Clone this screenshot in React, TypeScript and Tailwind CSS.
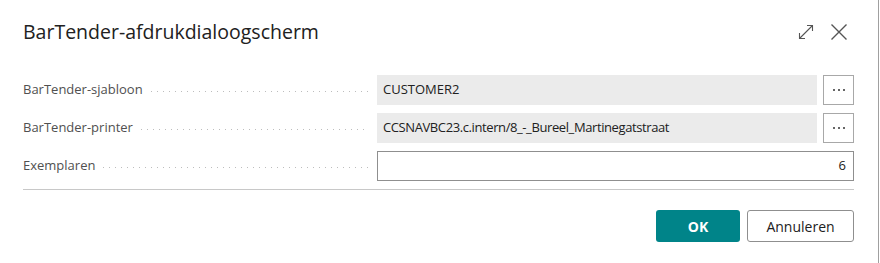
import React from "react";

const font = { fontFamily: '"Open Sans", "Noto Sans", sans-serif' };

function Leader() {
  return (
    <div className="flex-1 mx-2 h-px self-center mt-[3px] bg-[linear-gradient(to_right,#bdbdbd_1px,transparent_1px)] bg-[length:6px_1px] bg-repeat-x" />
  );
}

function Row({ label, children }: { label: string; children: React.ReactNode }) {
  return (
    <div className="flex items-stretch h-[30px]">
      <div className="w-[354px] flex items-center pr-[1px]">
        <span className="text-[13px] text-[#505050] whitespace-nowrap">{label}</span>
        <Leader />
      </div>
      <div className="flex-1 flex gap-[6px]">{children}</div>
    </div>
  );
}

function Dots() {
  return (
    <div className="w-[31px] border border-[#a8a8a8] bg-white flex items-center justify-center gap-[3px]">
      <span className="w-[2px] h-[2px] bg-[#333] rounded-full" />
      <span className="w-[2px] h-[2px] bg-[#333] rounded-full" />
      <span className="w-[2px] h-[2px] bg-[#333] rounded-full" />
    </div>
  );
}

export default function App() {
  return (
    <div className="w-[880px] h-[263px] bg-white" style={font}>
      <div className="w-[879px] h-[263px] border-r border-[#a0a0a0] pl-[23px] pr-[24px]">
        <div className="flex items-center h-[62px] pt-[1px]">
          <div className="text-[19.5px] text-[#212121] flex-1">BarTender-afdrukdialoogscherm</div>
          <svg width="16" height="16" viewBox="0 0 16 16" className="mr-[16px]" fill="none" stroke="#555" strokeWidth="1.1">
            <path d="M1.5 14.5 L14.5 1.5 M9 1.5 H14.5 V7 M1.5 9 V14.5 H7" />
          </svg>
          <svg width="18" height="18" viewBox="0 0 18 18" className="mr-[6px]" fill="none" stroke="#555" strokeWidth="1.4">
            <path d="M1.5 1.5 L16.5 16.5 M16.5 1.5 L1.5 16.5" />
          </svg>
        </div>
        <div className="flex flex-col gap-[8px] mt-[13px]">
          <Row label="BarTender-sjabloon">
            <div className="flex-1 bg-[#ebebeb] flex items-center px-[6px] text-[13px] text-[#212121]">CUSTOMER2</div>
            <Dots />
          </Row>
          <Row label="BarTender-printer">
            <div className="flex-1 bg-[#ebebeb] flex items-center px-[6px] text-[13px] text-[#212121] tracking-[-0.4px]">CCSNAVBC23.c.intern/8_-_Bureel_Martinegatstraat</div>
            <Dots />
          </Row>
          <Row label="Exemplaren">
            <div className="flex-1 border border-[#8f8f8f] bg-white flex items-center justify-end px-[7px] text-[13px] text-[#212121]">6</div>
          </Row>
        </div>
        <div className="h-px bg-[#c8c8c8] mt-[8px]" />
        <div className="flex justify-end gap-[7px] mt-[20px]">
          <button className="w-[84px] h-[32px] rounded-[3px] bg-[#008489] text-white text-[14px] font-bold">OK</button>
          <button className="w-[107px] h-[32px] rounded-[3px] border border-[#8f8f8f] bg-white text-[#212121] text-[14px]">Annuleren</button>
        </div>
      </div>
    </div>
  );
}
